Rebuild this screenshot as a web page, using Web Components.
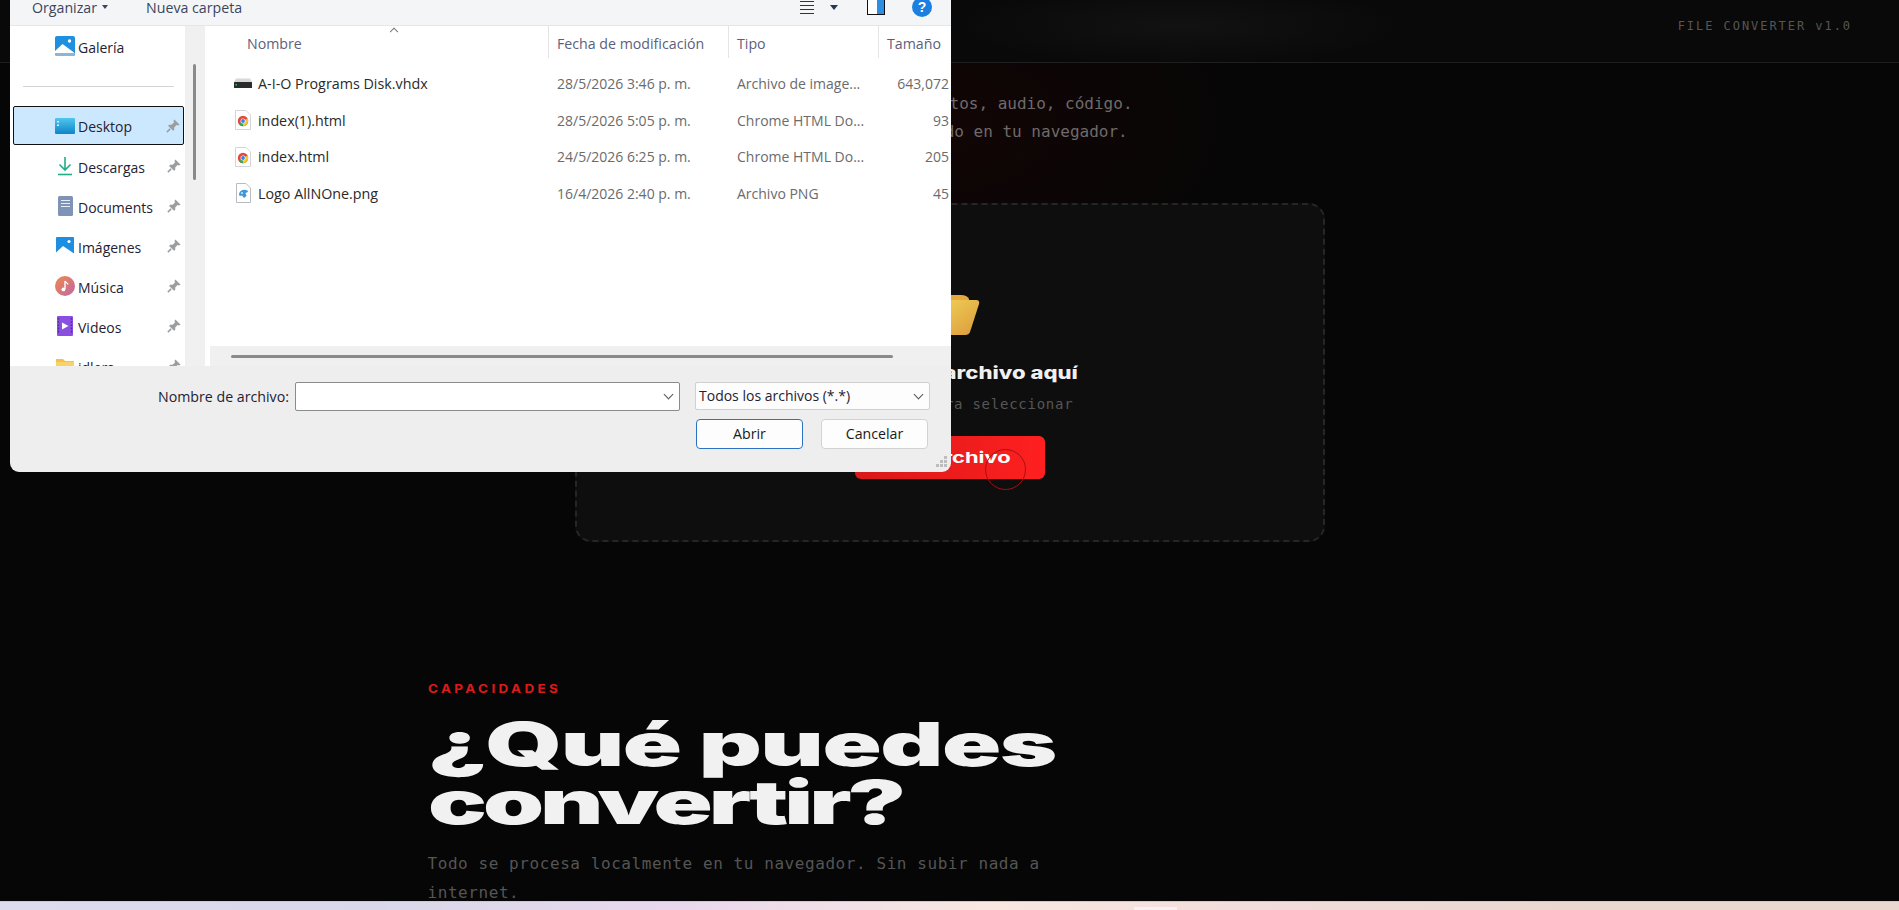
<!DOCTYPE html>
<html lang="es">
<head>
<meta charset="utf-8">
<title>File Converter</title>
<style>
html, body { margin: 0; height: 100%; overflow: hidden; background: #060606; }
</style>
</head>
<body>
<converter-page></converter-page>
<file-dialog></file-dialog>

<script>
const MONO = '"DejaVu Sans Mono", "Liberation Mono", monospace';
const WIDE = 'Inter, "Liberation Sans", sans-serif';
const UI = '"Open Sans", "Noto Sans", sans-serif';

const ICONS = {
    gallery: `<svg width="20" height="20" viewBox="0 0 20 20"><rect x="0" y="0" width="20" height="20" rx="2" fill="#1f8fe0"/><circle cx="14.5" cy="5" r="1.7" fill="#fff"/><path d="M0 15 L7.5 8 L19 16.5 V17 H0Z" fill="#fff"/><path d="M0 17 H20 V18 Q20 20 18 20 H2 Q0 20 0 18Z" fill="#8fb4d8"/></svg>`,
    desktop: `<svg width="20" height="16" viewBox="0 0 20 16"><defs><linearGradient id="d" x1="0" y1="0" x2="0" y2="1"><stop offset="0" stop-color="#4fc6ee"/><stop offset="1" stop-color="#0f84c8"/></linearGradient></defs><rect width="20" height="16" rx="1" fill="url(#d)"/><rect x="2" y="3" width="2" height="1.5" fill="#e6f7ff"/><rect x="2" y="6.5" width="2" height="1.5" fill="#e6f7ff"/></svg>`,
    download: `<svg width="16" height="20" viewBox="0 0 16 20"><path d="M8 1 V14 M2.5 8.5 L8 14 L13.5 8.5" fill="none" stroke="#22ac88" stroke-width="1.6"/><path d="M1 18.5 H15" stroke="#22ac88" stroke-width="1.6"/></svg>`,
    docs: `<svg width="15" height="20" viewBox="0 0 15 20"><rect width="15" height="20" rx="1.5" fill="#7e93b6"/><path d="M3 4.5 H12 M3 7.5 H12 M3 10.5 H12" stroke="#e8edf5" stroke-width="1"/></svg>`,
    images: `<svg width="18" height="18" viewBox="0 0 18 18"><rect width="18" height="18" rx="1" fill="#1e8ee2"/><circle cx="13" cy="4.5" r="1.6" fill="#fff"/><path d="M0 15.5 L7 9 L18 16.5 V18 H0Z" fill="#fff"/></svg>`,
    music: `<svg width="20" height="20" viewBox="0 0 20 20"><defs><linearGradient id="m" x1="0" y1="0" x2="1" y2="1"><stop offset="0" stop-color="#ee8a4a"/><stop offset="1" stop-color="#c066a8"/></linearGradient></defs><circle cx="10" cy="10" r="10" fill="url(#m)"/><path d="M10 5 V13" stroke="#fff" stroke-width="1.4"/><path d="M10 5 C11 7 13 7 13 8.5" stroke="#fff" stroke-width="1.2" fill="none"/><circle cx="8.4" cy="13.4" r="1.9" fill="#fff"/></svg>`,
    videos: `<svg width="16" height="20" viewBox="0 0 16 20"><rect width="16" height="20" rx="1" fill="#8a4fe0"/><path d="M5 6.5 L11.5 10 L5 13.5Z" fill="#fff"/><path d="M1.5 2 V18 M14.5 2 V18" stroke="#4b2c9c" stroke-width="1.4" stroke-dasharray="1.6 1.6"/></svg>`,
    folder: `<svg width="18" height="16" viewBox="0 0 18 16"><path d="M0 1 H7 L9 3 H18 V16 H0Z" fill="#f2c14a"/><path d="M0 4 H18 V16 H0Z" fill="#f8d466"/></svg>`,
    pin: `<svg width="14" height="14" viewBox="0 0 13 13"><path d="M7.8 0.5 L12.5 5.2 L11.3 6 L9.8 5.6 L7.6 7.8 L7.6 10.2 L6.6 11 L2 6.4 L2.8 5.4 L5.2 5.4 L7.4 3.2 L7 1.7Z" fill="#9a9ea2"/><path d="M3.8 9.2 L0.8 12.2" stroke="#9a9ea2" stroke-width="1.4"/></svg>`,
    drive: `<svg width="18" height="10" viewBox="0 0 18 10"><path d="M2 0.5 H16 L18 4 H0Z" fill="#d8d8d8"/><rect y="4" width="18" height="6" rx="0.5" fill="#2b2b2b"/><rect x="1.5" y="6" width="1.5" height="1.5" fill="#39c46a"/></svg>`,
    chrome: `<svg width="16" height="20" viewBox="0 0 16 20"><path d="M0.5 0.5 H11 L15.5 5 V19.5 H0.5Z" fill="#fff" stroke="#d5d5d5"/><circle cx="8" cy="11" r="5.2" fill="#e4483a"/><path d="M8 11 L3.5 13.6 A5.2 5.2 0 0 0 8 16.2 L12.5 13.6 Z" fill="#3aa757"/><path d="M8 11 L12.5 8.4 A5.2 5.2 0 0 1 8 16.2Z" fill="#f7c52e"/><circle cx="8" cy="11" r="2.5" fill="#fff"/><circle cx="8" cy="11" r="1.9" fill="#3d7fe6"/></svg>`,
    png: `<svg width="15" height="20" viewBox="0 0 15 20"><path d="M0.5 0.5 H10 L14.5 5 V19.5 H0.5Z" fill="#fff" stroke="#b8bcc2"/><path d="M3 11 C4 7 8 6 11.5 7.5 L12 9 L9.5 10 L10.5 13 L8 15 L6 12.5 L3.5 13Z" fill="#3f97dc"/><circle cx="6" cy="10" r="1.1" fill="#bfe3f8"/></svg>`
};

class ConverterPage extends HTMLElement {
    constructor() {
        super();
        this.attachShadow({mode: "open"}).innerHTML = `
        <style>
        :host {
            display: flex;
            flex-direction: column;
            height: 100vh;
            overflow: hidden;
            background: #060606;
        }
        main { flex: 1; min-height: 0; overflow: hidden; }
        </style>
        <main>
            <site-header></site-header>
            <hero-block></hero-block>
            <capabilities-block></capabilities-block>
        </main>
        <task-strip></task-strip>`;
    }
}

class SiteHeader extends HTMLElement {
    constructor() {
        super();
        this.attachShadow({mode: "open"}).innerHTML = `
        <style>
        :host {
            display: flex;
            justify-content: flex-end;
            align-items: center;
            height: 62px;
            padding-right: 47px;
            border-bottom: 1px solid #1f1f1f;
            background: radial-gradient(ellipse 230px 40px at 1180px 26px, #121212, #090909 100%);
            font: 12px ${MONO};
            letter-spacing: 1.95px;
            color: #565656;
        }
        span { margin-bottom: 10px; }
        </style>
        <span>FILE CONVERTER v1.0</span>`;
    }
}

class HeroBlock extends HTMLElement {
    constructor() {
        super();
        this.attachShadow({mode: "open"}).innerHTML = `
        <style>
        :host {
            display: flex;
            flex-direction: column;
            align-items: center;
            padding-top: 27px;
            height: 570px;
            box-sizing: border-box;
            background: radial-gradient(ellipse 300px 190px at 950px 60px, #120505, #060606 100%);
        }
        p {
            margin: 0 0 57px;
            text-align: center;
            font: 16px/28px ${MONO};
            color: #6f6a6a;
        }
        </style>
        <p>Fotos, PDF, documentos, audio, código.<br>Sin servidores, todo en tu navegador.</p>
        <drop-zone></drop-zone>`;
    }
}

class DropZone extends HTMLElement {
    constructor() {
        super();
        this.attachShadow({mode: "open"}).innerHTML = `
        <style>
        :host {
            display: flex;
            flex-direction: column;
            align-items: center;
            width: 750px;
            height: 339px;
            box-sizing: border-box;
            padding-top: 88px;
            background: #0e0e0e;
            border: 2px dashed #262626;
            border-radius: 16px;
        }
        svg { display: block; margin-left: 6px; }
        h3 {
            margin: 22px 0 0;
            font: 800 17px/24px ${WIDE};
            color: #f0f0f0;
            white-space: nowrap;
            transform: scaleX(1.3);
        }
        small {
            margin-top: 9px;
            font: 14px/20px ${MONO};
            letter-spacing: 0.75px;
            color: #565656;
        }
        button {
            position: relative;
            margin-top: 22px;
            width: 190px;
            height: 43px;
            border: 0;
            border-radius: 6px;
            background: linear-gradient(90deg, #d81818, #ff2020);
            color: #fff;
            font: 700 15px ${WIDE};
        }
        button span { display: inline-block; transform: scaleX(1.46); }
        i {
            position: absolute;
            left: 130px;
            top: 13px;
            width: 39px;
            height: 39px;
            border: 1px solid #a81010;
            border-radius: 50%;
        }
        </style>
        <svg width="60" height="46" viewBox="0 0 60 46">
            <defs><linearGradient id="f" x1="0" y1="0" x2="1" y2="1"><stop offset="0" stop-color="#f0d558"/><stop offset="1" stop-color="#dc9a3c"/></linearGradient></defs>
            <path d="M8 2 H38 Q44 2 46 6 V14 H8Z" fill="#e8a83e"/>
            <path d="M10 7 H53 Q57 7 56 11 L47 39 Q46 42 42 42 H10Z" fill="url(#f)"/>
        </svg>
        <h3>Arrastra tu archivo aquí</h3>
        <small>o haz clic para seleccionar</small>
        <button><span>Ver archivo</span><i></i></button>`;
    }
}

class CapabilitiesBlock extends HTMLElement {
    constructor() {
        super();
        this.attachShadow({mode: "open"}).innerHTML = `
        <style>
        :host {
            display: block;
            width: 1044px;
            margin: 0 auto;
            padding-top: 48px;
        }
        .tag {
            font: 700 12px/16px ${WIDE};
            letter-spacing: 3px;
            color: #e01818;
            transform: scaleX(1.12);
            transform-origin: left;
        }
        h2 {
            margin: 18px 0 0;
            font: 900 60px/58px ${WIDE};
            letter-spacing: -0.9px;
            color: #f1f1f1;
            transform: scaleX(1.63);
            transform-origin: left;
        }
        h2 span { display: block; }
        h2 span + span { letter-spacing: -2.5px; }
        p {
            margin: 18px 0 0;
            width: 640px;
            font: 16px/29px ${MONO};
            letter-spacing: 0.57px;
            color: #555;
        }
        </style>
        <div class="tag">CAPACIDADES</div>
        <h2><span>¿Qué puedes</span><span>convertir?</span></h2>
        <p>Todo se procesa localmente en tu navegador. Sin subir nada a internet.</p>`;
    }
}

class TaskStrip extends HTMLElement {
    constructor() {
        super();
        this.attachShadow({mode: "open"}).innerHTML = `
        <style>
        :host {
            display: flex;
            justify-content: center;
            align-items: flex-end;
            flex: none;
            height: 9px;
            padding-left: 412px;
            box-sizing: border-box;
            border-top: 1px solid #cfcabf;
            background: linear-gradient(90deg, #dcdcee, #d9d8ea 20%, #ead8ee 36%, #f8e8e0 52%, #f3dcdc 66%, #ead8d0 82%, #e8d8d0);
        }
        span { width: 43px; height: 3px; background: #f8f2f2; }
        </style>
        <span></span>`;
    }
}

class NavItem extends HTMLElement {
    constructor() {
        super();
        const pinned = this.hasAttribute("pinned");
        this.attachShadow({mode: "open"}).innerHTML = `
        <style>
        :host {
            display: flex;
            align-items: center;
            flex: none;
            height: 40px;
            box-sizing: border-box;
            margin-left: 3px;
            width: 171px;
            font: 14px ${UI};
            color: #1e2233;
        }
        :host([selected]) {
            background: #cce8ff;
            border: 1px solid #111;
            border-radius: 2px;
            height: 39px;
            margin-bottom: 1px;
        }
        .ic { width: 24px; margin-left: 40px; margin-right: 1px; display: flex; justify-content: center; }
        :host([selected]) .ic { margin-left: 39px; }
        .tx { flex: 1; padding-top: 2px; }
        .pin { width: 14px; margin-right: 3px; height: 14px; }
        svg { display: block; }
        </style>
        <span class="ic">${ICONS[this.getAttribute("icon")]}</span>
        <span class="tx"><slot></slot></span>
        ${pinned ? `<span class="pin">${ICONS.pin}</span>` : ""}`;
    }
}

class FileRow extends HTMLElement {
    constructor() {
        super();
        this.attachShadow({mode: "open"}).innerHTML = `
        <style>
        :host {
            display: grid;
            grid-template-columns: 342px 180px 150px 70px;
            align-items: center;
            height: 36.7px;
            font: 14px ${UI};
            color: #6b6b6b;
            white-space: nowrap;
        }
        .name { display: flex; align-items: center; color: #2a2a2a; font-size: 14.3px; }
        .ic { width: 24px; margin-left: 24px; margin-right: 3px; display: flex; justify-content: center; }
        .date { padding-left: 8px; }
        .type { padding-left: 8px; overflow: hidden; }
        .size { text-align: right; }
        svg { display: block; }
        </style>
        <span class="name"><span class="ic">${ICONS[this.getAttribute("icon")]}</span>${this.getAttribute("name")}</span>
        <span class="date">${this.getAttribute("date")}</span>
        <span class="type">${this.getAttribute("type")}</span>
        <span class="size">${this.getAttribute("size")}</span>`;
    }
}

class FileDialog extends HTMLElement {
    constructor() {
        super();
        this.attachShadow({mode: "open"}).innerHTML = `
        <style>
        :host {
            position: absolute;
            left: 10px;
            top: -20px;
            width: 941px;
            height: 492px;
            display: flex;
            flex-direction: column;
            overflow: hidden;
            background: #eeeeee;
            border-radius: 0 0 9px 9px;
            font: 14.2px ${UI};
            color: #1e2233;
        }
        .toolbar {
            flex: none;
            display: flex;
            align-items: center;
            height: 46px;
            box-sizing: border-box;
            padding: 9px 0 0 22px;
            background: #f4f5f7;
            border-bottom: 1px solid #e6e6e6;
            color: #3a4560;
        }
        .toolbar .caret { width: 0; height: 0; margin: 0 38px 0 5px; border: 3.5px solid transparent; border-top: 4px solid #3a4560; border-bottom: 0; }
        .tools { margin-left: auto; display: flex; align-items: center; }
        .tools svg { display: block; }
        .body { flex: 1; min-height: 0; display: flex; background: #fff; }
        nav { flex: none; width: 175px; display: flex; flex-direction: column; overflow: hidden; }
        nav hr { flex: none; width: 151px; margin: 20px 0 19px 13px; border: 0; border-top: 1px solid #d4d4d4; }
        .rail { flex: none; width: 20px; background: #f0f0f0; position: relative; margin-right: 2px; }
        .rail b { position: absolute; left: 8px; top: 38px; width: 3px; height: 116px; border-radius: 2px; background: #8a8a8a; }
        .list { flex: 1; min-width: 0; display: flex; flex-direction: column; }
        .head {
            position: relative;
            flex: none;
            display: grid;
            grid-template-columns: 342px 180px 150px 70px;
            height: 32px;
            margin-bottom: 7px;
            color: #5c5f7c;
            line-height: 36px;
        }
        .head span { padding-left: 8px; box-shadow: -1px 0 0 #e5e5e5; white-space: nowrap; overflow: hidden; }
        .head span:first-child { padding-left: 40px; box-shadow: none; }
        .head em { position: absolute; left: 184px; top: 0; width: 5px; height: 5px; border-left: 1px solid #777; border-top: 1px solid #777; transform: rotate(45deg) translate(2px, 2px); }
        .rows { flex: 1; min-height: 0; }
        .hscroll { flex: none; height: 20px; margin-left: 3px; background: #f0f0f0; display: flex; align-items: center; padding-left: 21px; }
        .hscroll b { width: 662px; height: 3px; border-radius: 2px; background: #8a8a8a; }
        footer { flex: none; height: 106px; position: relative; display: grid; grid-template-columns: 148px 131px 391px 250px; grid-template-rows: 29px 30px; row-gap: 8px; padding-top: 16px; box-sizing: border-box; }
        label { grid-column: 2; align-self: center; white-space: nowrap; }
        .input { grid-column: 3; margin-left: 6px; width: 385px; box-sizing: border-box; border: 1px solid #8b8b8b; border-radius: 2px; background: #fff; position: relative; }
        .combo { grid-column: 4; margin-left: 15px; width: 235px; height: 28px; box-sizing: border-box; border: 1px solid #d0d0d0; border-radius: 2px; background: #fdfdfd; padding-left: 3px; line-height: 26px; position: relative; font-size: 14px; white-space: nowrap; }
        .chev { position: absolute; right: 7px; top: 8px; width: 6px; height: 6px; border-right: 1px solid #555; border-bottom: 1px solid #555; transform: rotate(45deg); }
        .btns { grid-column: 3 / 5; grid-row: 2; justify-self: end; display: flex; gap: 18px; margin-right: 2px; }
        .btn { width: 107px; height: 30px; box-sizing: border-box; border: 1px solid #d2d2d2; border-radius: 4px; background: #fdfdfd; text-align: center; line-height: 28px; color: #1a1a1a; }
        .btn.def { border: 1px solid #2b72c4; }
        .grip { position: absolute; right: 2px; bottom: 2px; }
        </style>
        <div class="toolbar">
            <span>Organizar</span><span class="caret"></span><span>Nueva carpeta</span>
            <div class="tools">
                <svg width="14" height="18" viewBox="0 0 14 18"><path d="M0 3.5 H14 M0 7.5 H14 M0 11.5 H14 M0 15.5 H14" stroke="#333" stroke-width="1"/></svg>
                <svg style="margin:0 29px 0 16px" width="8" height="5" viewBox="0 0 8 5"><path d="M0 0 H8 L4 5Z" fill="#2a3550"/></svg>
                <svg style="margin-right:27px" width="18" height="16" viewBox="0 0 18 16"><rect x="0.5" y="0.5" width="17" height="15" fill="#fff" stroke="#111"/><rect x="10" y="1" width="7" height="14" fill="#2c8fe4"/></svg>
                <svg style="margin-right:19px" width="20" height="20" viewBox="0 0 20 20"><circle cx="10" cy="10" r="10" fill="#1a7fe0"/><text x="10" y="15" text-anchor="middle" font-family="Liberation Sans" font-size="14" font-weight="700" fill="#fff">?</text></svg>
            </div>
        </div>
        <div class="body">
            <nav>
                <nav-item icon="gallery">Galería</nav-item>
                <hr>
                <nav-item icon="desktop" pinned selected>Desktop</nav-item>
                <nav-item icon="download" pinned>Descargas</nav-item>
                <nav-item icon="docs" pinned>Documents</nav-item>
                <nav-item icon="images" pinned>Imágenes</nav-item>
                <nav-item icon="music" pinned>Música</nav-item>
                <nav-item icon="videos" pinned>Videos</nav-item>
                <nav-item icon="folder" pinned>idlers</nav-item>
            </nav>
            <div class="rail"><b></b></div>
            <div class="list">
                <div class="head"><span>Nombre</span><span>Fecha de modificación</span><span>Tipo</span><span>Tamaño</span><em></em></div>
                <div class="rows">
                    <file-row icon="drive" name="A-I-O Programs Disk.vhdx" date="28/5/2026 3:46 p. m." type="Archivo de image..." size="643,072"></file-row>
                    <file-row icon="chrome" name="index(1).html" date="28/5/2026 5:05 p. m." type="Chrome HTML Do..." size="93"></file-row>
                    <file-row icon="chrome" name="index.html" date="24/5/2026 6:25 p. m." type="Chrome HTML Do..." size="205"></file-row>
                    <file-row icon="png" name="Logo AllNOne.png" date="16/4/2026 2:40 p. m." type="Archivo PNG" size="45"></file-row>
                </div>
                <div class="hscroll"><b></b></div>
            </div>
        </div>
        <footer>
            <label>Nombre de archivo:</label>
            <div class="input"><span class="chev"></span></div>
            <div class="combo">Todos los archivos (*.*)<span class="chev"></span></div>
            <div class="btns"><div class="btn def">Abrir</div><div class="btn">Cancelar</div></div>
            <svg class="grip" width="14" height="14" viewBox="0 0 14 14" fill="#bdbdbd"><rect x="9" y="0" width="3" height="3"/><rect x="5" y="4" width="3" height="3"/><rect x="9" y="4" width="3" height="3"/><rect x="1" y="8" width="3" height="3"/><rect x="5" y="8" width="3" height="3"/><rect x="9" y="8" width="3" height="3"/></svg>
        </footer>`;
    }
}

customElements.define("site-header", SiteHeader);
customElements.define("drop-zone", DropZone);
customElements.define("hero-block", HeroBlock);
customElements.define("capabilities-block", CapabilitiesBlock);
customElements.define("task-strip", TaskStrip);
customElements.define("converter-page", ConverterPage);
customElements.define("nav-item", NavItem);
customElements.define("file-row", FileRow);
customElements.define("file-dialog", FileDialog);
</script>
</body>
</html>
